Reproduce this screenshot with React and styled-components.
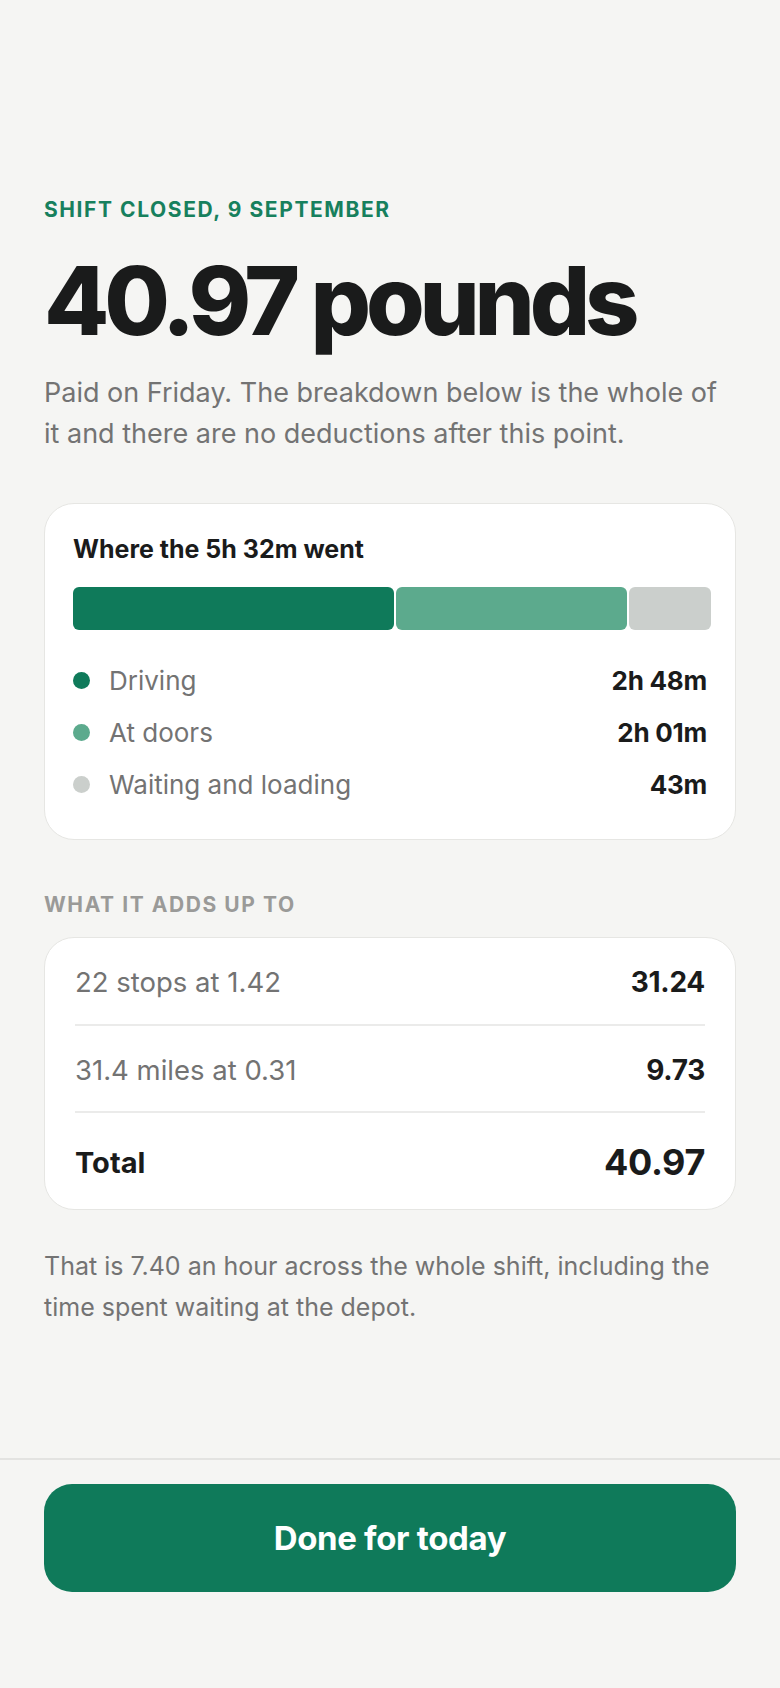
import React from 'react';
import styled, { createGlobalStyle } from 'styled-components';

const GlobalStyle = createGlobalStyle`
  * {
    box-sizing: border-box;
  }

  html, body {
    margin: 0;
    padding: 0;
    background: #f5f5f3;
  }

  body {
    font-family: Inter, "Noto Sans", "Liberation Sans", sans-serif;
    -webkit-font-smoothing: antialiased;
  }
`;

const Page = styled.div`
  min-height: 100vh;
  display: flex;
  flex-direction: column;
  background: #f5f5f3;
`;

const Main = styled.main`
  flex: 1;
  padding: 196px 44px 40px;
`;

const Eyebrow = styled.div`
  font-size: 21px;
  font-weight: 700;
  letter-spacing: 0.075em;
  line-height: 28px;
  color: #17805d;
  text-transform: uppercase;
`;

const Amount = styled.h1`
  margin: 25px 0 0;
  font-size: 95px;
  font-weight: 800;
  letter-spacing: -0.055em;
  line-height: 1.1;
  color: #1a1b1b;
`;

const Lede = styled.p`
  margin: 18px 0 0;
  font-size: 27px;
  line-height: 41px;
  color: #737373;
`;

const Card = styled.section`
  margin-top: ${p => p.$top || 0}px;
  background: #fff;
  border: 1px solid #e6e6e3;
  border-radius: 30px;
  padding: ${p => p.$pad};
`;

const CardTitle = styled.h2`
  margin: 0;
  font-size: 25px;
  font-weight: 700;
  line-height: 32px;
  color: #1a1b1b;
`;

// the segments run a few px past the value column, as in the design
const Bar = styled.div`
  display: flex;
  gap: 2px;
  height: 43px;
  margin: 22px -4px 0 0;
`;

const Segment = styled.div`
  flex: ${p => p.$grow} 0 0;
  border-radius: 6px;
  background: ${p => p.$color};
`;

const Legend = styled.ul`
  list-style: none;
  margin: 35px 0 0;
  padding: 0;
  display: flex;
  flex-direction: column;
  gap: 20px;
`;

const LegendRow = styled.li`
  display: flex;
  align-items: center;
  height: 32px;
`;

const Dot = styled.span`
  width: 17px;
  height: 17px;
  border-radius: 50%;
  background: ${p => p.$color};
  margin-right: 19px;
  flex-shrink: 0;
`;

const LegendLabel = styled.span`
  flex: 1;
  font-size: 26px;
  color: #737373;
`;

const Value = styled.span`
  font-size: ${p => p.$size || 26}px;
  font-weight: 700;
  color: #1a1b1b;
  letter-spacing: -0.01em;
`;

const SectionLabel = styled.div`
  margin-top: 51px;
  font-size: 21px;
  font-weight: 700;
  letter-spacing: 0.075em;
  line-height: 28px;
  color: #9a9a98;
  text-transform: uppercase;
`;

const LineRow = styled.div`
  display: flex;
  align-items: center;
  justify-content: space-between;
  height: ${p => p.$h}px;
  padding-top: 3px;
  border-bottom: ${p => (p.$last ? 'none' : '2px solid #ebebea')};
`;

const LineLabel = styled.span`
  color: ${p => (p.$strong ? '#1a1b1b' : '#737373')};
  font-weight: ${p => (p.$strong ? 700 : 400)};
  font-size: ${p => (p.$strong ? 29 : 27.5)}px;
`;

const Note = styled.p`
  margin: 36px 0 0;
  font-size: 25px;
  line-height: 41px;
  color: #737373;
`;

const Footer = styled.footer`
  border-top: 2px solid #e3e3e1;
  padding: 24px 44px 96px;
`;

const DoneButton = styled.button`
  display: block;
  width: 100%;
  height: 108px;
  border: none;
  border-radius: 28px;
  background: #0f7a5a;
  color: #fff;
  font-family: inherit;
  font-size: 33px;
  font-weight: 700;
  letter-spacing: -0.01em;
  cursor: pointer;
`;

const segments = [
  { label: 'Driving', value: '2h 48m', minutes: 168, color: '#0f7a5a' },
  { label: 'At doors', value: '2h 01m', minutes: 121, color: '#5caa8d' },
  { label: 'Waiting and loading', value: '43m', minutes: 43, color: '#cbcfcc' },
];

const lines = [
  { label: '22 stops at 1.42', value: '31.24', h: 88 },
  { label: '31.4 miles at 0.31', value: '9.73', h: 87 },
];

const App = () => {
  return (
    <Page>
      <GlobalStyle />
      <Main>
        <Eyebrow>Shift closed, 9 September</Eyebrow>
        <Amount>40.97 pounds</Amount>
        <Lede>
          Paid on Friday. The breakdown below is the whole of it and there are no
          deductions after this point.
        </Lede>

        <Card $top={49} $pad="29px 28px 38px">
          <CardTitle>Where the 5h 32m went</CardTitle>
          <Bar>
            {segments.map(s => (
              <Segment key={s.label} $grow={s.minutes} $color={s.color} />
            ))}
          </Bar>
          <Legend>
            {segments.map(s => (
              <LegendRow key={s.label}>
                <Dot $color={s.color} />
                <LegendLabel>{s.label}</LegendLabel>
                <Value>{s.value}</Value>
              </LegendRow>
            ))}
          </Legend>
        </Card>

        <SectionLabel>What it adds up to</SectionLabel>
        <Card $top={18} $pad="0 30px">
          {lines.map(l => (
            <LineRow key={l.label} $h={l.h}>
              <LineLabel>{l.label}</LineLabel>
              <Value $size={28}>{l.value}</Value>
            </LineRow>
          ))}
          <LineRow $h={96} $last>
            <LineLabel $strong>Total</LineLabel>
            <Value $size={36}>40.97</Value>
          </LineRow>
        </Card>

        <Note>
          That is 7.40 an hour across the whole shift, including the time spent
          waiting at the depot.
        </Note>
      </Main>

      <Footer>
        <DoneButton>Done for today</DoneButton>
      </Footer>
    </Page>
  );
};

export default App;
